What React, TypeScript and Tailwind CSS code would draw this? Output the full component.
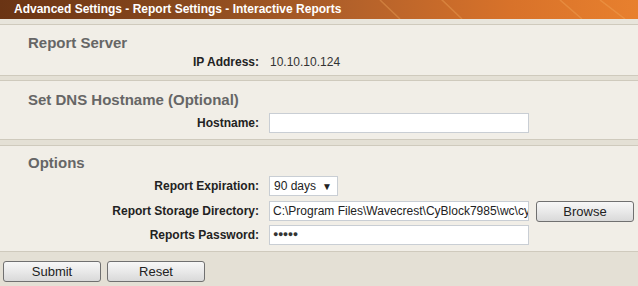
import React from 'react';

const font = { fontFamily: '"Liberation Sans", Arial, sans-serif' };

function Label({ children }: { children: React.ReactNode }) {
  return <div className="w-[259px] shrink-0 text-right text-[12px] font-bold text-[#222]">{children}</div>;
}

function Btn({ children }: { children: React.ReactNode }) {
  return (
    <button className="h-[21px] w-[98px] rounded-[3px] border border-[#707070] bg-[linear-gradient(#f7f7f7,#e9e9e9_50%,#d9d9d9)] text-[13px] leading-[19px] text-[#222]">
      {children}
    </button>
  );
}

function TextBox({ value, password }: { value?: string; password?: boolean }) {
  return (
    <div className="flex h-[20px] w-[260px] items-center overflow-hidden whitespace-nowrap border border-[#c9ced4] bg-white pl-[3px] text-[12px] text-[#222]">
      {password ? <span className="text-[9px] tracking-[-0.5px] text-[#333]">●●●●●</span> : value}
    </div>
  );
}

export default function App() {
  return (
    <div style={font} className="h-[286px] w-[638px] overflow-hidden bg-[#e4e0d5]">
      <div className="relative h-[19px] overflow-hidden bg-[linear-gradient(90deg,#6a3414_0%,#8a4a1e_30%,#b3612a_55%,#d8722a_80%,#e8802e_100%)] pl-[14px] text-[12px] font-bold leading-[19px] text-white">
        <svg className="absolute inset-0" width="638" height="19">
          <path d="M380 0 L400 19 M440 -2 L462 19 M560 0 L582 19 M600 0 L625 19" stroke="#f4b060" strokeOpacity="0.35" strokeWidth="1.5" />
        </svg>
        <span className="relative">Advanced Settings - Report Settings - Interactive Reports</span>
      </div>
      <div className="h-[5px] bg-[#e8e5dc]" />

      <div className="h-[52px] border-y border-[#cfcabd] bg-[#f1eee7] pt-[9px]">
        <div className="pl-[28px] text-[15px] font-bold leading-[18px] text-[#666]">Report Server</div>
        <div className="mt-[2px] flex h-[16px] items-center">
          <Label>IP Address:</Label>
          <div className="ml-[11px] text-[12px] text-[#333]">10.10.10.124</div>
        </div>
      </div>

      <div className="mt-[4px] h-[60px] border-y border-[#cfcabd] bg-[#f1eee7] pt-[10px]">
        <div className="pl-[28px] text-[15px] font-bold leading-[18px] text-[#666]">Set DNS Hostname (Optional)</div>
        <div className="mt-[4px] flex h-[20px] items-center">
          <Label>Hostname:</Label>
          <div className="ml-[10px]">
            <TextBox />
          </div>
        </div>
      </div>

      <div className="mt-[5px] h-[107px] border-y border-[#cfcabd] bg-[#f1eee7] pt-[8px]">
        <div className="pl-[28px] text-[15px] font-bold leading-[18px] text-[#666]">Options</div>
        <div className="mt-[4px] flex h-[20px] items-center">
          <Label>Report Expiration:</Label>
          <div className="ml-[10px] flex h-[20px] w-[69px] items-center justify-between border border-[#c9ced4] bg-white pl-[4px] pr-[5px] text-[12px] text-[#222]">
            <span>90 days</span>
            <span className="text-[10px]">▼</span>
          </div>
        </div>
        <div className="mt-[4px] flex h-[21px] items-center">
          <Label>Report Storage Directory:</Label>
          <div className="ml-[10px]">
            <TextBox value="C:\Program Files\Wavecrest\CyBlock7985\wc\cyblock" />
          </div>
          <div className="ml-[7px]">
            <Btn>Browse</Btn>
          </div>
        </div>
        <div className="mt-[4px] flex h-[20px] items-center">
          <Label>Reports Password:</Label>
          <div className="ml-[10px]">
            <TextBox password />
          </div>
        </div>
      </div>

      <div className="flex gap-[6px] pl-[3px] pt-[9px]">
        <Btn>Submit</Btn>
        <Btn>Reset</Btn>
      </div>
    </div>
  );
}
